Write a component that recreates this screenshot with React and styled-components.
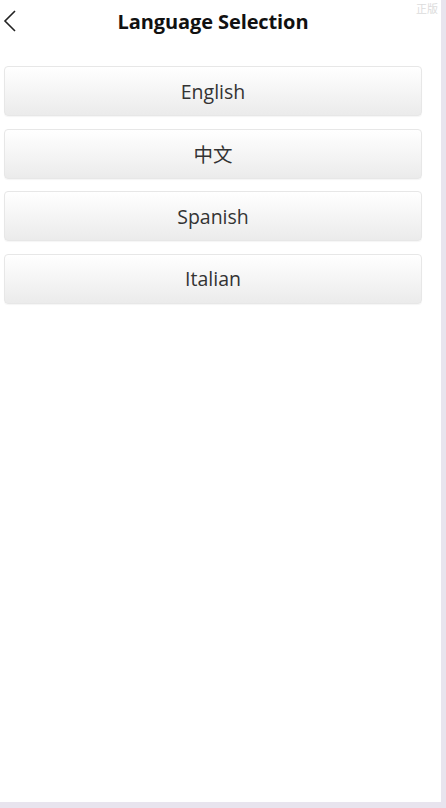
import React from 'react';
import styled, { createGlobalStyle } from 'styled-components';

const GlobalStyle = createGlobalStyle`
html, body {
    margin: 0;
    padding: 0;
    background: #e8e4ee;
}
body {
    font-family: "Open Sans", "Noto Sans CJK SC", sans-serif;
}
`

const Frame = styled.div`
position: relative;
width: 441px;
height: 802px;
background: #ffffff;
overflow: hidden;
`

const Page = styled.div`
width: 426px;
`

const Header = styled.div`
position: relative;
display: flex;
align-items: center;
justify-content: center;
height: 42px;
margin-bottom: 24px;
`

const BackButton = styled.button`
position: absolute;
left: 2px;
top: 9px;
width: 16px;
height: 24px;
padding: 0;
border: none;
background: none;
display: flex;
align-items: center;
justify-content: center;
`

const Title = styled.h1`
margin: 0;
font-size: 20px;
font-weight: 700;
color: #111;
letter-spacing: -0.1px;
`

const Watermark = styled.div`
position: absolute;
top: 2px;
right: 3px;
font-size: 11px;
line-height: 13px;
color: #dcdcdc;
font-family: "Noto Sans CJK SC", sans-serif;
white-space: nowrap;
`

const List = styled.div`
display: flex;
flex-direction: column;
gap: 12.5px;
padding: 0 4px;
`

const LangButton = styled.button`
height: 50px;
width: 100%;
border: 1px solid #e7e7e7;
border-radius: 4px;
background: linear-gradient(to bottom, #ffffff 0%, #f4f4f4 55%, #ebebeb 100%);
font-family: "Open Sans", "Noto Sans CJK SC", sans-serif;
font-size: 19.5px;
color: #333;
padding: 0;
box-shadow: 0 1px 1px rgba(0, 0, 0, 0.04);
`

const languages = ['English', '中文', 'Spanish', 'Italian']

function App() {
    return (
        <Frame>
            <GlobalStyle />
            <Watermark>正版</Watermark>
            <Page>
                <Header>
                    <BackButton>
                        <svg width="14" height="24" viewBox="0 0 14 24">
                            <path d="M12 2 L2 12 L12 22" fill="none" stroke="#222" strokeWidth="1.6" />
                        </svg>
                    </BackButton>
                    <Title>Language Selection</Title>
                </Header>
                <List>
                    {languages.map(l => <LangButton key={l}>{l}</LangButton>)}
                </List>
            </Page>
        </Frame>
    );
}

export default App;
